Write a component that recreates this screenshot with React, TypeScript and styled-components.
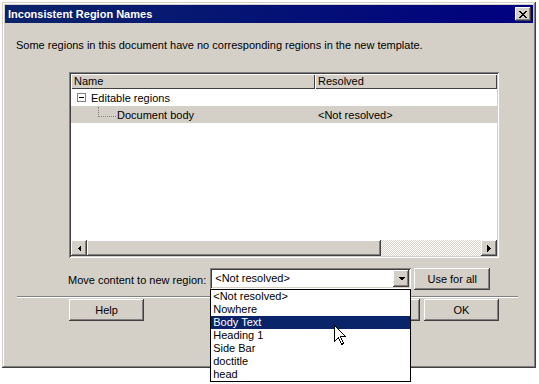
import styled, { createGlobalStyle } from "styled-components";

const GlobalStyle = createGlobalStyle`
  html, body {
    margin: 0;
    padding: 0;
    background: #fff;
  }
  body {
    font-family: "Liberation Sans", Arial, sans-serif;
    font-size: 11px;
    color: #000;
  }
`;

const raised = `
  background: #d4d0c8;
  box-shadow: inset -1px -1px #404040, inset 1px 1px #fff,
    inset -2px -2px #808080, inset 2px 2px #d4d0c8;
`;

const sunken = `
  box-shadow: inset 1px 1px #808080, inset -1px -1px #fff,
    inset 2px 2px #404040, inset -2px -2px #d4d0c8;
`;

const Page = styled.div`
  height: 384px;
  box-sizing: border-box;
  padding: 2px 0 0 2px;
`;

const Window = styled.div`
  position: relative;
  width: 534px;
  height: 366px;
  box-sizing: border-box;
  padding: 3px;
  background: #d4d0c8;
  box-shadow: inset -1px -1px #404040, inset 1px 1px #d4d0c8,
    inset -2px -2px #808080, inset 2px 2px #fff;
  display: flex;
  flex-direction: column;
`;

const TitleBar = styled.div`
  height: 18px;
  display: flex;
  align-items: center;
  justify-content: space-between;
  padding: 0 2px 0 3px;
  background: linear-gradient(90deg, #0a246a, #000080);
`;

const Title = styled.span`
  color: #fff;
  font-weight: bold;
  font-size: 11px;
`;

const CloseButton = styled.div`
  width: 16px;
  height: 14px;
  ${raised}
  display: flex;
  align-items: center;
  justify-content: center;
`;

const Body = styled.div`
  display: flex;
  flex-direction: column;
  padding: 16px 15px 0 11px;
`;

const Message = styled.p`
  margin: 0;
  line-height: 13px;
`;

const Inner = styled.div`
  position: relative;
  margin: 20px 0 0 53px;
  width: 430px;
`;

const ListBox = styled.div`
  height: 186px;
  box-sizing: border-box;
  padding: 2px;
  background: #fff;
  ${sunken}
  display: flex;
  flex-direction: column;
`;

const HeaderRow = styled.div`
  display: flex;
  height: 15px;
`;

const HeaderCell = styled.div<{ $width?: number }>`
  ${({ $width }) => ($width ? `width: ${$width}px;` : "flex: 1;")}
  box-sizing: border-box;
  padding-left: 3px;
  line-height: 14px;
  background: #d4d0c8;
  box-shadow: inset 1px 1px #fff, inset -1px -1px #404040;
`;

const TreeRow = styled.div<{ $selected?: boolean }>`
  display: flex;
  align-items: center;
  height: 17px;
  background: ${({ $selected }) => ($selected ? "#d4d0c8" : "#fff")};
`;

const NameCell = styled.div`
  width: 244px;
  height: 100%;
  display: flex;
  align-items: center;
`;

const ValueCell = styled.div`
  padding-left: 3px;
`;

const Expander = styled.div`
  width: 9px;
  height: 9px;
  box-sizing: border-box;
  margin: 0 5px 0 6px;
  border: 1px solid #808080;
  background: #fff;
  display: flex;
  align-items: center;
  justify-content: center;

  &::after {
    content: "";
    width: 5px;
    height: 1px;
    background: #000;
  }
`;

const Connector = styled.div`
  align-self: flex-start;
  width: 17px;
  height: 9px;
  margin: 1px 1px 0 27px;
  border-left: 1px dotted #808080;
  border-bottom: 1px dotted #808080;
`;

const ListSpace = styled.div`
  flex: 1;
`;

const ScrollBar = styled.div`
  display: flex;
  height: 16px;
`;

const ScrollButton = styled.div`
  width: 16px;
  height: 16px;
  ${raised}
  display: flex;
  align-items: center;
  justify-content: center;
`;

const Thumb = styled.div<{ $width: number }>`
  width: ${({ $width }) => $width}px;
  ${raised}
`;

const Track = styled.div`
  flex: 1;
  background-image: conic-gradient(#fff 25%, #d4d0c8 0 50%, #fff 0 75%, #d4d0c8 0);
  background-size: 2px 2px;
`;

const ComboRow = styled.div`
  display: flex;
  align-items: flex-start;
  margin-top: 10px;
`;

const Label = styled.span`
  align-self: center;
  margin: 1px 4px 0 -1px;
`;

const ComboWrap = styled.div`
  position: relative;
  width: 201px;
  margin-right: 3px;
`;

const Combo = styled.div`
  height: 21px;
  box-sizing: border-box;
  padding: 2px;
  background: #fff;
  ${sunken}
  display: flex;
`;

const ComboText = styled.div`
  flex: 1;
  padding-left: 3px;
  line-height: 17px;
`;

const ComboArrow = styled.div`
  width: 16px;
  height: 17px;
  ${raised}
  display: flex;
  align-items: center;
  justify-content: center;
`;

const DropList = styled.div`
  position: absolute;
  top: 100%;
  left: 0;
  width: 100%;
  box-sizing: border-box;
  border: 1px solid #000;
  background: #fff;
  z-index: 10;
`;

const DropItem = styled.div<{ $active?: boolean }>`
  height: 13px;
  line-height: 13px;
  padding-left: 2px;
  background: ${({ $active }) => ($active ? "#0a246a" : "transparent")};
  color: ${({ $active }) => ($active ? "#fff" : "#000")};
`;

const Cursor = styled.svg`
  position: absolute;
  left: 123px;
  top: 35px;
  z-index: 11;
`;

const Button = styled.div<{ $width?: number }>`
  width: ${({ $width }) => $width ?? 75}px;
  height: 22px;
  ${raised}
  display: flex;
  align-items: center;
  justify-content: center;
`;

const Separator = styled.div`
  margin: 6px 0 0 1px;
  border-top: 1px solid #808080;
  border-bottom: 1px solid #fff;
`;

const ButtonRow = styled.div`
  display: flex;
  justify-content: space-between;
  margin: 1px 0 0 53px;
  width: 430px;
`;

const ButtonGroup = styled.div`
  display: flex;
  gap: 4px;
`;

const regions = [
  "<Not resolved>",
  "Nowhere",
  "Body Text",
  "Heading 1",
  "Side Bar",
  "doctitle",
  "head",
];

function Triangle({ dir }: { dir: "left" | "right" | "down" }) {
  const pts = {
    left: "4,0 4,7 0.5,3.5",
    right: "0,0 0,7 3.5,3.5",
    down: "0,0 7,0 3.5,3.5",
  }[dir];
  const w = dir === "down" ? 7 : 4;
  const h = dir === "down" ? 4 : 7;
  return (
    <svg width={w} height={h} viewBox={`0 0 ${w} ${h}`} shapeRendering="crispEdges">
      <polygon points={pts} fill="#000" />
    </svg>
  );
}

export default function App() {
  return (
    <>
      <GlobalStyle />
      <Page>
        <Window>
          <TitleBar>
            <Title>Inconsistent Region Names</Title>
            <CloseButton>
              <svg width="8" height="7" viewBox="0 0 8 7" shapeRendering="crispEdges">
                <path
                  d="M0 0h2v1h1v1h2v-1h1v-1h2v1h-1v1h-1v1h-1v1h1v1h1v1h1v1h-2v-1h-1v-1h-2v1h-1v1h-2v-1h1v-1h1v-1h1v-1h-1v-1h-1v-1h-1z"
                  fill="#000"
                />
              </svg>
            </CloseButton>
          </TitleBar>

          <Body>
            <Message>
              Some regions in this document have no corresponding regions in the new template.
            </Message>

            <Inner>
              <ListBox>
                <HeaderRow>
                  <HeaderCell $width={244}>Name</HeaderCell>
                  <HeaderCell>Resolved</HeaderCell>
                </HeaderRow>
                <TreeRow>
                  <NameCell>
                    <Expander />
                    Editable regions
                  </NameCell>
                </TreeRow>
                <TreeRow $selected>
                  <NameCell>
                    <Connector />
                    Document body
                  </NameCell>
                  <ValueCell>&lt;Not resolved&gt;</ValueCell>
                </TreeRow>
                <ListSpace />
                <ScrollBar>
                  <ScrollButton>
                    <Triangle dir="left" />
                  </ScrollButton>
                  <Thumb $width={294} />
                  <Track />
                  <ScrollButton>
                    <Triangle dir="right" />
                  </ScrollButton>
                </ScrollBar>
              </ListBox>

              <ComboRow>
                <Label>Move content to new region:</Label>
                <ComboWrap>
                  <Combo>
                    <ComboText>&lt;Not resolved&gt;</ComboText>
                    <ComboArrow>
                      <Triangle dir="down" />
                    </ComboArrow>
                  </Combo>
                  <DropList>
                    {regions.map((r) => (
                      <DropItem key={r} $active={r === "Body Text"}>
                        {r}
                      </DropItem>
                    ))}
                    <Cursor width="13" height="21" viewBox="0 0 13 21" shapeRendering="crispEdges">
                      <path
                        d="M0.5 0.5 L0.5 16.5 L4.5 12.5 L7.5 19.5 L9.5 18.5 L6.5 11.5 L11.5 11.5 Z"
                        fill="#fff"
                        stroke="#000"
                        strokeWidth="1"
                      />
                    </Cursor>
                  </DropList>
                </ComboWrap>
                <Button $width={76}>Use for all</Button>
              </ComboRow>
            </Inner>

            <Separator />

            <ButtonRow>
              <Button>Help</Button>
              <ButtonGroup>
                <Button>Cancel</Button>
                <Button>OK</Button>
              </ButtonGroup>
            </ButtonRow>
          </Body>
        </Window>
      </Page>
    </>
  );
}
